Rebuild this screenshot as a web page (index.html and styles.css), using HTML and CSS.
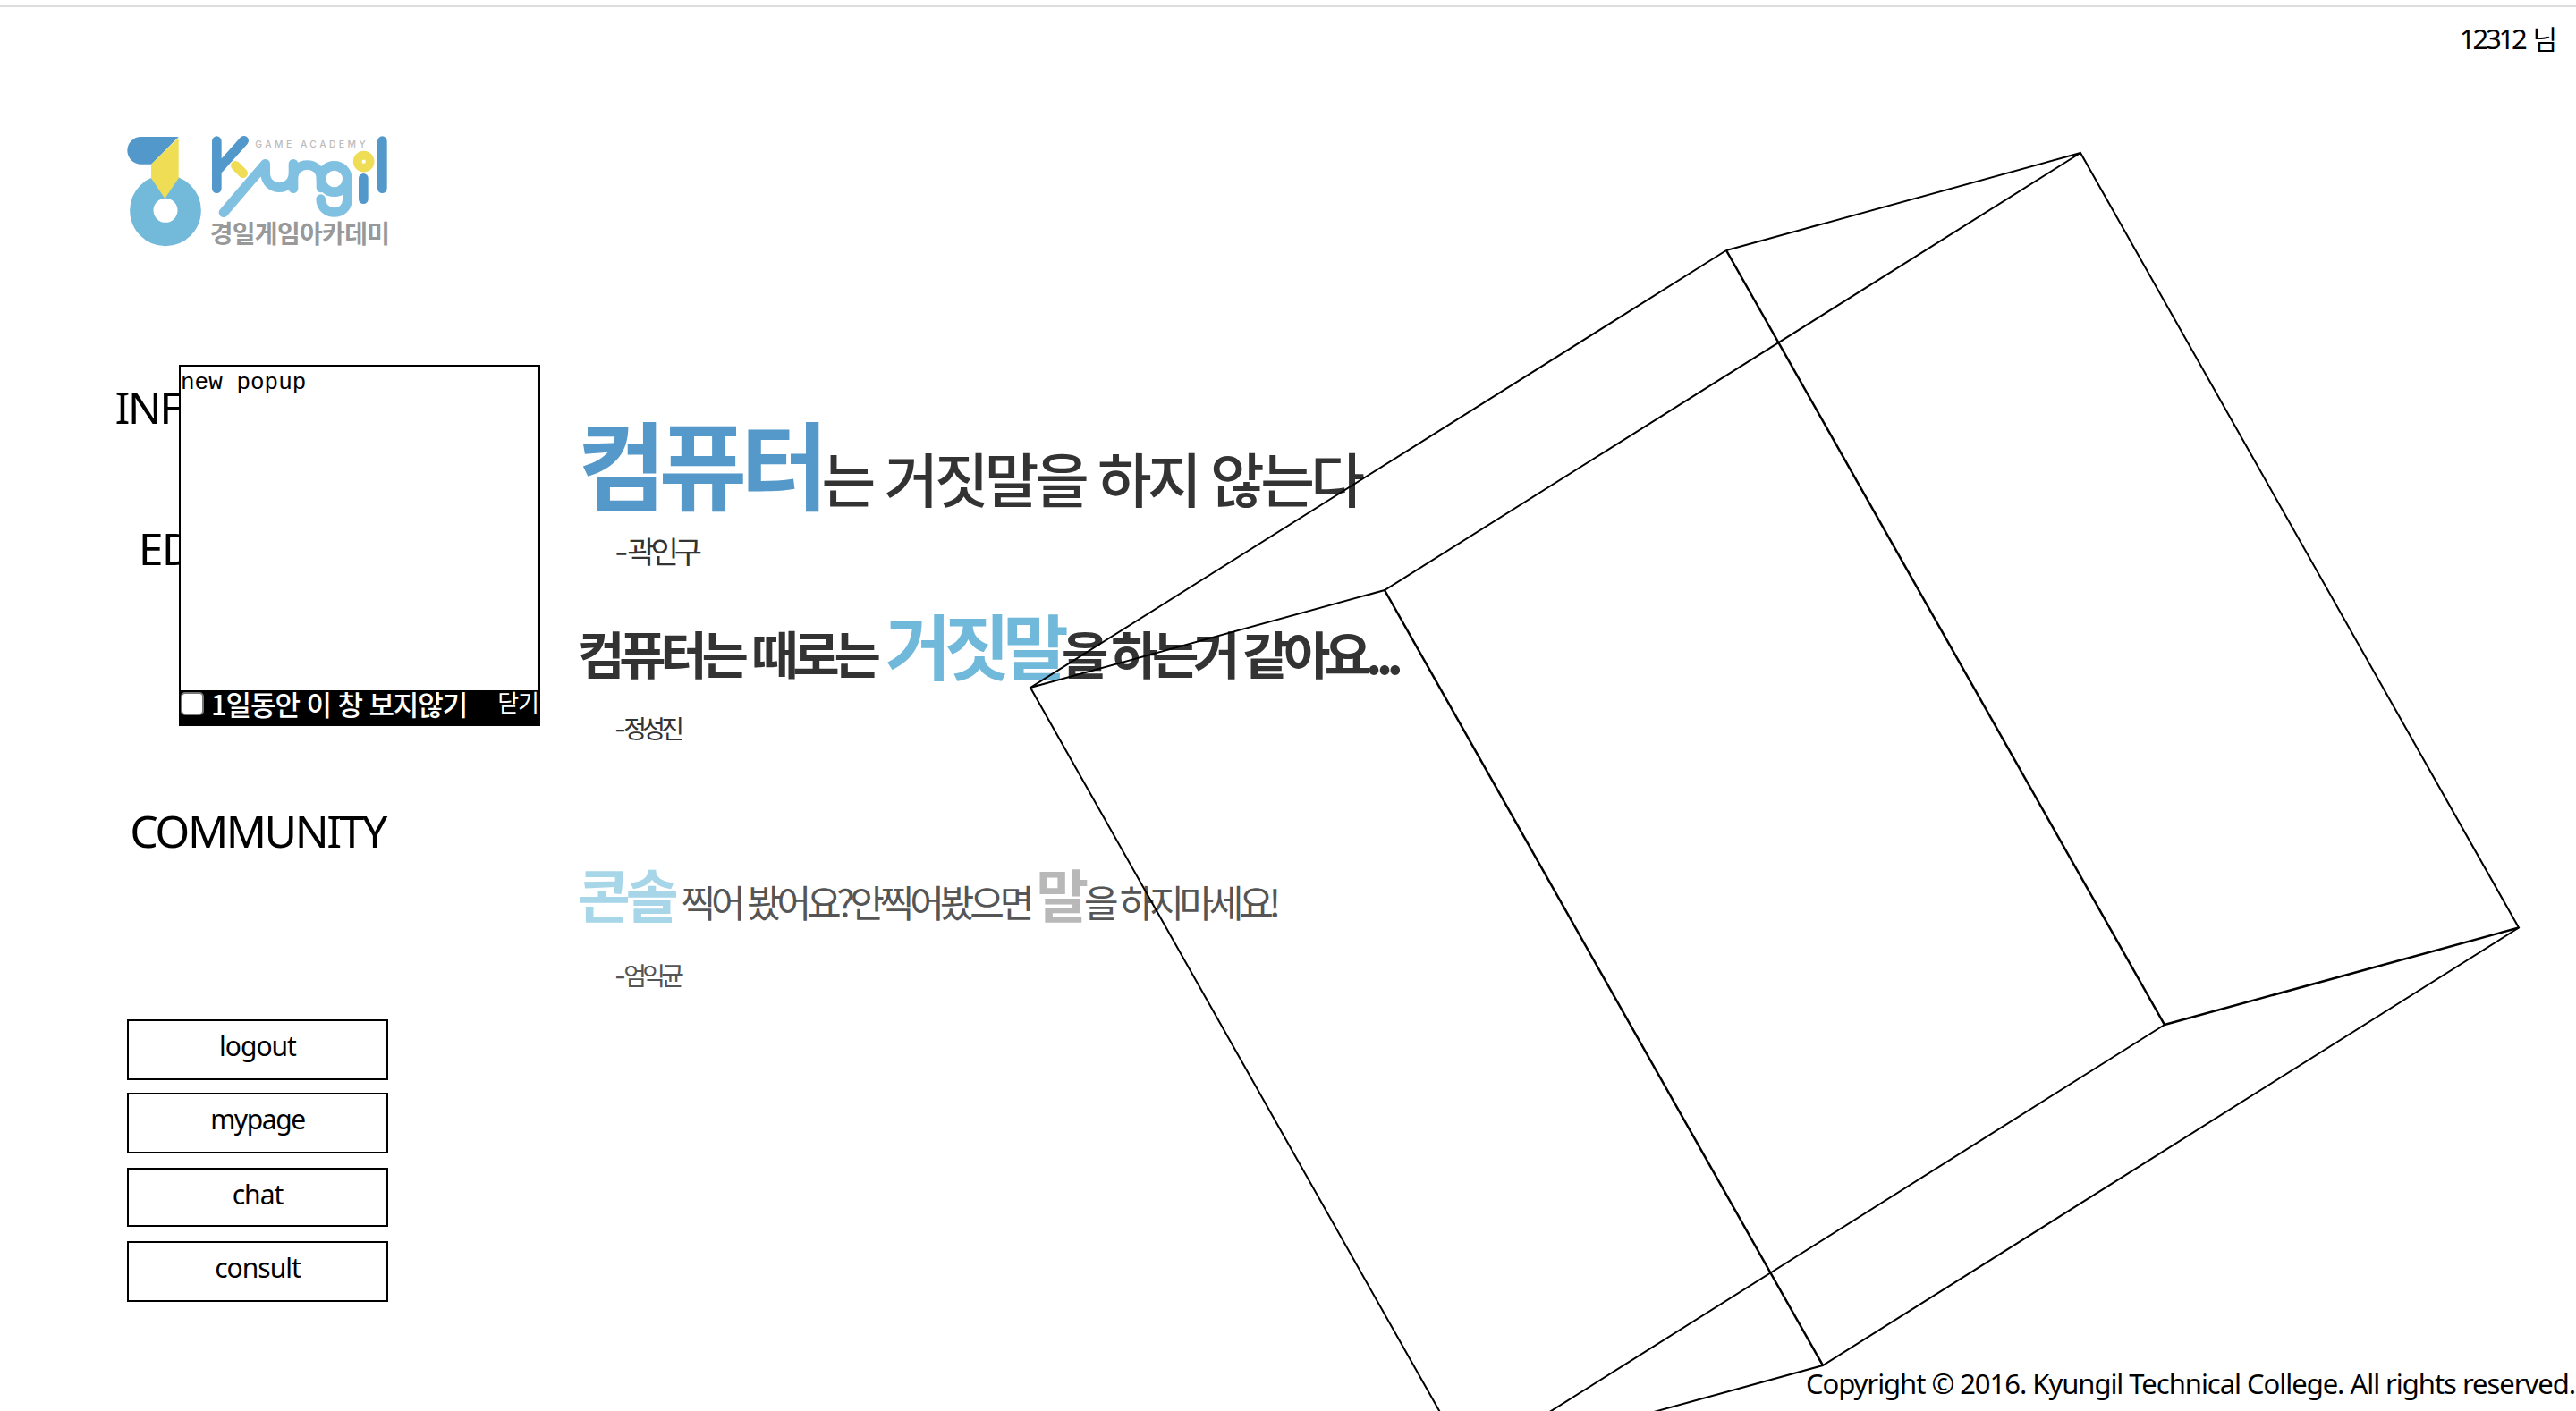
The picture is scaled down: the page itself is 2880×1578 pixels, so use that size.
FILE: index.html
```html
<!DOCTYPE html>
<html lang="ko">
<head>
<meta charset="utf-8">
<title>Kyungil Game Academy</title>
<link rel="stylesheet" href="styles.css">
</head>
<body>
<div class="page">
  <header class="topbar"><span class="user">12312 <span class="user-suffix">님</span></span></header>
  <div class="content">
    <aside class="sidebar">
      <svg class="logo" viewBox="0 0 1020 480" role="img" aria-label="Kyungil Game Academy">
        <circle cx="195" cy="316" r="80" fill="none" stroke="#72b9da" stroke-width="79"/>
        <path d="M113 69H239L148 161H113A46 46 0 0 1 113 69Z" fill="#5398ca"/>
        <path d="M239 72V208L193 276L147 208V161Z" fill="#eedd55"/>
        <g fill="none" stroke-linecap="round" stroke-linejoin="round" stroke-width="32">
          <path d="M367 83V242M458 82L375 175M922 83V242M859 208V278" stroke="#5398ca"/>
          <path d="M430 166L455 191" stroke="#eedd55"/>
          <path d="M390 323L530 160V190C530 255 624 255 624 190V160V242V210C624 148 717 148 717 210V240" stroke="#80c1e2"/>
          <path d="M717 210A44 44 0 0 0 805 210A44 44 0 0 0 717 210M805 210V280C805 337 717 337 716 278" stroke="#80c1e2"/>
        </g>
        <circle cx="860" cy="152" r="21" fill="none" stroke="#eedd55" stroke-width="29"/>
        <text class="logo-en" x="496" y="104" textLength="370">GAME ACADEMY</text>
        <text class="logo-ko" x="344" y="426" textLength="604">경일게임아카데미</text>
      </svg>
      <nav class="menu">
        <a class="menu-item">INFORMATION</a>
        <a class="menu-item menu-wide">EDUCATION</a>
        <a class="menu-item menu-last">COMMUNITY</a>
      </nav>
      <div class="actions">
        <a class="action">logout</a>
        <a class="action">mypage</a>
        <a class="action action-short">chat</a>
        <a class="action">consult</a>
      </div>
    </aside>
    <main class="quotes">
      <p class="quote first"><b class="key">컴퓨터</b><span class="rest">는 거짓말을 하지 않는다</span></p>
      <p class="author author-large"><span class="dash">-</span>곽인구</p>
      <p class="quote second"><span class="rest">컴퓨터는 때로는</span><b class="key">거짓말</b><span class="rest tail">을 하는거 같아요...</span></p>
      <p class="author"><span class="dash">-</span>정성진</p>
      <p class="quote third"><b class="key">콘솔</b><span class="rest">찍어 봤어요?안찍어봤으면</span><b class="key muted">말</b><span class="rest tail">을 하지마세요!</span></p>
      <p class="author author-light"><span class="dash">-</span>엄익균</p>
    </main>
  </div>
  <svg class="cube" viewBox="0 0 2880 1578">
    <path d="M1930 280L2326 171L2816 1037.5L2038 1527L1642 1636L1152 769L1930 280M1152 769L1548 660L2326 171M2420 1146L1642 1636"/>
    <path class="edge-heavy" d="M1930 280L2420 1146L2816 1037.5M1548 660L2038 1527"/>
  </svg>
  <footer class="copyright">Copyright © 2016. Kyungil Technical College. All rights reserved.</footer>
  <section class="popup">
    <div class="popup-body">new popup</div>
    <div class="popup-foot">
      <label class="popup-label"><span class="check"></span>1일동안 이 창 보지않기</label>
      <a class="popup-close">닫기</a>
    </div>
  </section>
</div>
</body>
</html>
```

FILE: styles.css
```css
* { box-sizing: border-box; }
body {
  margin: 0;
  background: #fff;
  color: #000;
  font-family: "Noto Sans", "Noto Sans CJK KR", sans-serif;
}
.page {
  position: relative;
  width: 2880px;
  height: 1578px;
  overflow: hidden;
  padding-top: 6px;
}
.topbar {
  height: 124px;
  border-top: 2px solid #ddd;
  padding: 11px 21px 0 0;
  text-align: right;
  font-size: 31px;
  line-height: 46px;
}
.user { letter-spacing: -3.2px; }
.user-suffix { font-family: "Noto Sans CJK KR", sans-serif; font-size: 30px; margin-left: 4px; letter-spacing: 0; }
.content { display: flex; }
.sidebar { width: 460px; padding-left: 120px; }
.logo { display: block; width: 340px; height: 160px; }
.logo-en { font: 500 31px Inter, sans-serif; fill: #bbb; }
.logo-ko { font: 700 84px "Noto Sans CJK KR", sans-serif; fill: #999; }
.menu { display: flex; flex-direction: column; align-items: center; width: 336px; padding-top: 132px; }
.menu-item { height: 158px; font-size: 50px; line-height: 66px; letter-spacing: -2.5px; }
.menu-wide { letter-spacing: -1.8px; }
.menu-last { margin-top: 158px; }
.actions { display: flex; flex-direction: column; gap: 16px; width: 292px; margin: 86px 0 0 22px; }
.action {
  height: 68px;
  border: 2px solid #000;
  text-align: center;
  font-size: 30px;
  line-height: 56px;
  letter-spacing: -1px;
}
.action:nth-child(2) { margin-top: -2px; letter-spacing: -1.4px; }
.action-short { height: 66px; }
.quotes {
  padding: 332px 0 0 186px;
  color: #333;
  font-family: "Noto Sans CJK KR", sans-serif;
}
.quote, .author { margin: 0; line-height: 1; white-space: pre; }
.quote { display: flex; align-items: baseline; }
.first { height: 107px; font-size: 66px; font-weight: 500; letter-spacing: -4.6px; }
.first .key { color: #5599ca; font-size: 107px; font-weight: 700; letter-spacing: -7.6px; }
.author { padding-left: 41px; height: 28px; margin-top: 41px; font-size: 28px; letter-spacing: -4.8px; }
.dash { font-family: Inter, sans-serif; letter-spacing: -2.6px; }
.author-large { height: 34px; margin-top: 30px; font-size: 34px; letter-spacing: -5px; }
.author-large .dash { letter-spacing: -1.4px; }
.second { height: 80px; margin-top: 46px; font-size: 57px; font-weight: 700; letter-spacing: -6.3px; }
.second .key { color: #71b9db; font-size: 80px; font-weight: 700; margin-left: 11px; letter-spacing: -7.8px; }
.second .tail { letter-spacing: -6.6px; }
.third { height: 64px; margin-top: 138px; color: #555; font-size: 42px; letter-spacing: -5.15px; }
.third .key { color: #a7d6e9; font-size: 64px; font-weight: 700; margin-right: 8px; }
.third .muted { color: #b8b8b8; margin: 0 0 0 7px; }
.third .tail { letter-spacing: -5.3px; }
.author-light { margin-top: 46px; color: #555; }
.cube { position: absolute; inset: 0; width: 2880px; height: 1578px; fill: none; stroke: #000; stroke-width: 2; }
.edge-heavy { stroke-width: 2.5; }
.copyright {
  position: absolute;
  right: 1px;
  bottom: 8px;
  font-size: 31px;
  line-height: 46px;
  letter-spacing: -1.04px;
  white-space: nowrap;
}
.popup {
  position: absolute;
  left: 200px;
  top: 408px;
  display: flex;
  flex-direction: column;
  width: 404px;
  height: 404px;
  border: 2px solid #000;
  background: #fff;
}
.popup-body { flex: 1; padding-top: 2px; font: 26px/32px "Liberation Mono", monospace; }
.popup-foot {
  display: flex;
  justify-content: space-between;
  height: 38px;
  background: #000;
  color: #fff;
  font-family: "Noto Sans CJK KR", sans-serif;
}
.popup-label { display: flex; font-size: 31px; font-weight: 500; line-height: 29px; letter-spacing: -1.1px; }
.check { width: 26px; height: 26px; margin: 2px 8px 0 0; border: 2px solid #767676; border-radius: 5px; background: #fff; }
.popup-close { font-size: 26px; line-height: 26px; letter-spacing: -1px; }
```
